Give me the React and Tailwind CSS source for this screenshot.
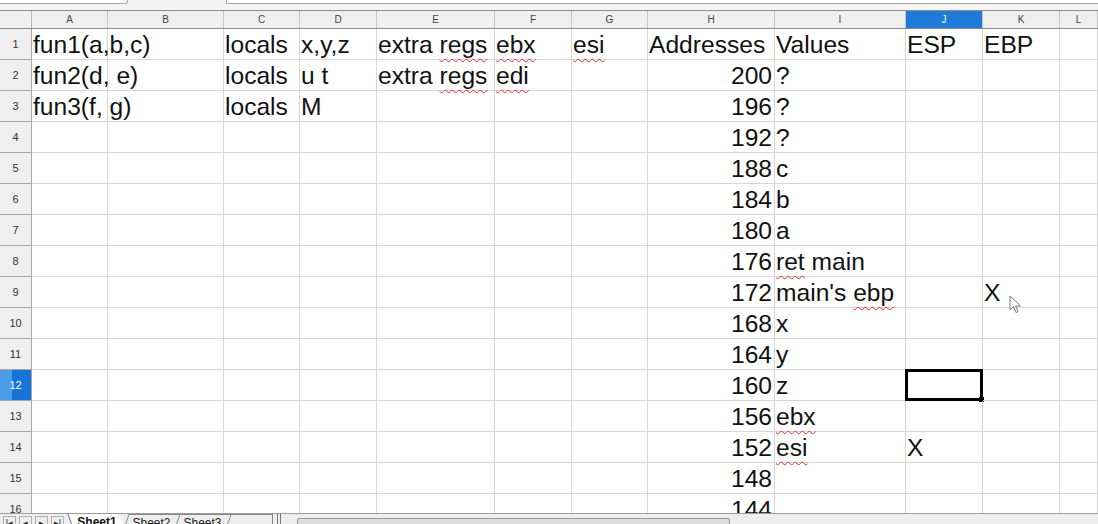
import React from "react";

const cols = ["A", "B", "C", "D", "E", "F", "G", "H", "I", "J", "K", "L"];

const gridCols =
  "grid grid-cols-[32px_76px_116px_76px_77px_118px_77px_76px_127px_131px_77px_77px_1fr]";

// spell-check squiggle
const Sq = ({ children }) => (
  <span className="underline decoration-wavy decoration-[#e03030] decoration-1 underline-offset-[5px]">
    {children}
  </span>
);

const data = {
  1: {
    A: "fun1(a,b,c)",
    C: "locals",
    D: "x,y,z",
    E: (
      <>
        extra <Sq>regs</Sq>
      </>
    ),
    F: <Sq>ebx</Sq>,
    G: <Sq>esi</Sq>,
    H: "Addresses",
    I: "Values",
    J: "ESP",
    K: "EBP",
  },
  2: {
    A: "fun2(d, e)",
    C: "locals",
    D: "u t",
    E: (
      <>
        extra <Sq>regs</Sq>
      </>
    ),
    F: <Sq>edi</Sq>,
    H: 200,
    I: "?",
  },
  3: { A: "fun3(f, g)", C: "locals", D: "M", H: 196, I: "?" },
  4: { H: 192, I: "?" },
  5: { H: 188, I: "c" },
  6: { H: 184, I: "b" },
  7: { H: 180, I: "a" },
  8: {
    H: 176,
    I: (
      <>
        <Sq>ret</Sq> main
      </>
    ),
  },
  9: {
    H: 172,
    I: (
      <>
        main's <Sq>ebp</Sq>
      </>
    ),
    K: "X",
  },
  10: { H: 168, I: "x" },
  11: { H: 164, I: "y" },
  12: { H: 160, I: "z" },
  13: { H: 156, I: <Sq>ebx</Sq> },
  14: { H: 152, I: <Sq>esi</Sq>, J: "X" },
  15: { H: 148 },
  16: { H: 144 },
};

function Cell({ row, col }) {
  const value = data[row]?.[col];
  const isNum = typeof value === "number";
  const selected = row === 12 && col === "J";
  return (
    <div className="relative h-[31px] border-r border-b border-[#d6d6d6]">
      {value !== undefined && (
        <div
          className={`absolute inset-y-0 whitespace-nowrap text-[24.6px] leading-[31px] text-[#111] ${
            isNum ? "right-[2px]" : "left-[1px]"
          }`}
        >
          {value}
        </div>
      )}
      {selected && (
        <div className="absolute -left-[1px] -top-[1px] -right-[1px] -bottom-[1px] border-[3px] border-black">
          <div className="absolute -right-[4px] -bottom-[4px] w-[5px] h-[5px] bg-black" />
        </div>
      )}
    </div>
  );
}

export default function App() {
  const rows = Array.from({ length: 16 }, (_, i) => i + 1);

  return (
    <div className="h-[524px] w-[1098px] flex flex-col overflow-hidden bg-white font-['Liberation_Sans',Arial,sans-serif]">
      {/* formula bar remnant */}
      <div className="h-[10px] flex bg-[#f4f4f4]">
        <div className="w-[128px] h-[4px] border-b border-r border-[#a8a8a8] bg-white rounded-br-[3px]" />
        <div className="w-[98px]" />
        <div className="flex-1 h-[4px] border-b border-l border-[#a8a8a8] bg-white" />
      </div>

      {/* column headers */}
      <div className={`${gridCols} h-[19px] bg-[#efefef] border-t border-b border-[#8c8c8c]`}>
        <div className="border-r border-[#b8b8b8]" />
        {cols.map((c) => (
          <div
            key={c}
            className={`flex items-center justify-center text-[10px] border-r border-[#c4c4c4] ${
              c === "J" ? "bg-[#1f7ad8] text-white" : "text-[#444]"
            }`}
          >
            {c}
          </div>
        ))}
      </div>

      {/* cells */}
      <div className="flex-1 overflow-hidden relative">
        {rows.map((r) => (
          <div key={r} className={gridCols}>
            <div
              className={`h-[31px] flex items-center justify-center text-[11px] border-b border-r border-[#a8a8a8] ${
                r === 12
                  ? "bg-[linear-gradient(90deg,#4d9ce8_0%,#4d9ce8_40%,#1873d6_40%)] text-white"
                  : "bg-[#efefef] text-[#333]"
              }`}
            >
              {r}
            </div>
            {cols.map((c) => (
              <Cell key={c} row={r} col={c} />
            ))}
          </div>
        ))}

        {/* mouse pointer */}
        <svg
          className="absolute left-[1009px] top-[266px]"
          width="14"
          height="20"
          viewBox="0 0 14 20"
        >
          <path
            d="M1 1 L1 15 L4.5 11.5 L7 17.5 L9 16.6 L6.6 11 L11.5 11 Z"
            fill="white"
            stroke="#777"
            strokeWidth="1"
            strokeLinejoin="round"
          />
        </svg>
      </div>

      {/* sheet tabs + scrollbar */}
      <div className="h-[11px] flex items-start bg-[#eeeeee] border-t border-[#9c9c9c] text-[12px] leading-[12px] overflow-hidden">
        <div className="flex gap-[3px] pl-[3px] pt-[2px] text-[#222] text-[9px]">
          <span className="w-[13px] h-[10px] border border-[#b0b0b0] flex items-start justify-center">
            |◂
          </span>
          <span className="w-[13px] h-[10px] border border-[#b0b0b0] flex items-start justify-center">
            ◂
          </span>
          <span className="w-[13px] h-[10px] border border-[#b0b0b0] flex items-start justify-center">
            ▸
          </span>
          <span className="w-[13px] h-[10px] border border-[#b0b0b0] flex items-start justify-center">
            ▸|
          </span>
        </div>
        <div className="ml-[6px] flex items-start">
          <span className="px-[6px] pt-[2px] font-bold text-[#111] bg-white border-l border-[#777] skew-x-[20deg]">
            <span className="inline-block -skew-x-[20deg]">Sheet1</span>
          </span>
          <span className="px-[6px] pt-[2px] text-[#222] border-l border-r border-t border-[#888] -skew-x-[20deg] ml-[4px]">
            <span className="inline-block skew-x-[20deg]">Sheet2</span>
          </span>
          <span className="px-[6px] pt-[2px] text-[#222] border-r border-t border-[#888] -skew-x-[20deg]">
            <span className="inline-block skew-x-[20deg]">Sheet3</span>
          </span>
          <span className="w-[44px] h-[10px] border-t border-r border-[#888]" />
        </div>
        <div className="ml-[4px] w-[4px] h-[11px] border-l border-r border-[#777]" />
        <div className="ml-[16px] flex-1 pt-[4px]">
          <div className="w-[433px] h-[7px] bg-[#dcdcdc] border border-[#9a9a9a] rounded-[2px]" />
        </div>
      </div>
    </div>
  );
}
